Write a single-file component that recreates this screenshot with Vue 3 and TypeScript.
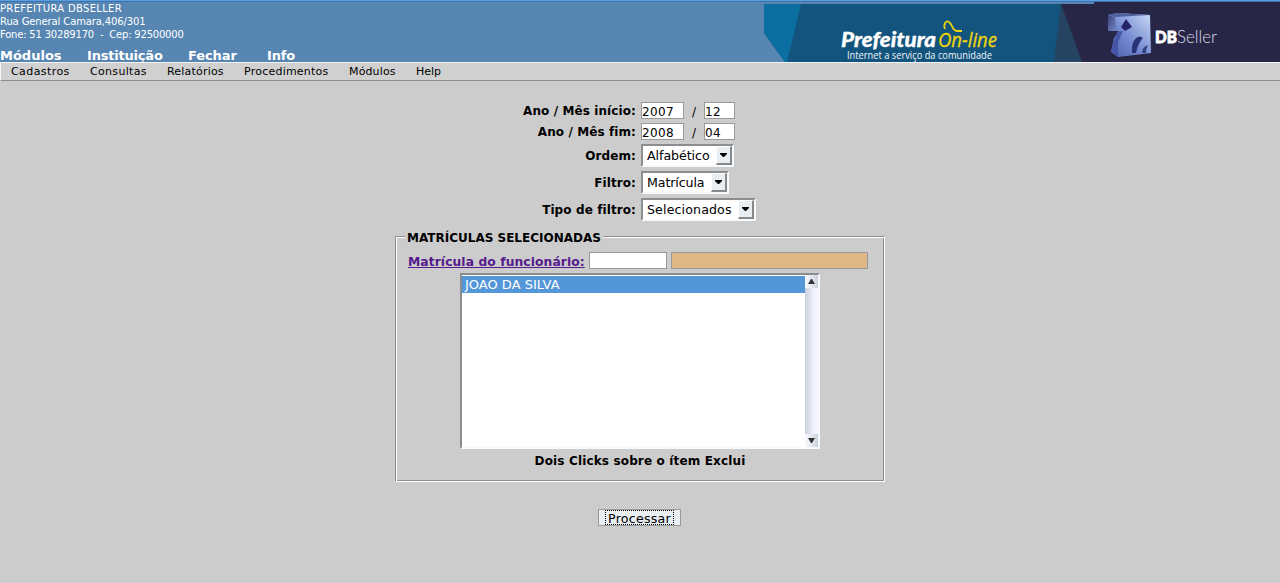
<script setup lang="ts">
import { ref } from 'vue'

const address = [
  { text: 'PREFEITURA DBSELLER', spacing: 0.33 },
  { text: 'Rua General Camara,406/301', spacing: -0.12 },
  { text: 'Fone: 51 30289170\u00a0 -\u00a0 Cep: 92500000', spacing: -0.2 },
]
const modules = [
  { text: 'Módulos', width: 62, gap: 25, spacing: 0 },
  { text: 'Instituição', width: 76, gap: 25, spacing: -0.2 },
  { text: 'Fechar', width: 50, gap: 29, spacing: -0.1 },
  { text: 'Info', width: 28, gap: 0, spacing: -0.2 },
]
const menu = [
  { text: 'Cadastros', width: 79, spacing: 0.42 },
  { text: 'Consultas', width: 77, spacing: 0.32 },
  { text: 'Relatórios', width: 77, spacing: 0.2 },
  { text: 'Procedimentos', width: 105, spacing: 0.23 },
  { text: 'Módulos', width: 67, spacing: 0.14 },
  { text: 'Help', width: 50, spacing: 0 },
]
const periods = ref([
  { label: 'Ano / Mês início:', year: '2007', month: '12' },
  { label: 'Ano / Mês fim:', year: '2008', month: '04' },
])
const selects = [
  { label: 'Ordem:', value: 'Alfabético', width: 93, spacing: -0.05 },
  { label: 'Filtro:', value: 'Matrícula', width: 88, spacing: -0.1 },
  { label: 'Tipo de filtro:', value: 'Selecionados', width: 115, spacing: 0.13 },
]
const code = ref('')
const employee = ref('')
</script>

<template>
  <div class="page">
    <header class="banner">
      <div class="account">
        <address>
          <div v-for="line in address" :key="line.text" :style="{ letterSpacing: line.spacing + 'px' }">{{ line.text }}</div>
        </address>
        <nav class="modules">
          <a v-for="m in modules" :key="m.text" :style="{ width: m.width + 'px', marginRight: m.gap + 'px', letterSpacing: m.spacing + 'px' }">{{ m.text }}</a>
        </nav>
      </div>
      <svg class="art" width="516" height="62" viewBox="764 0 516 62">
        <defs>
          <linearGradient id="cube" x1="0" y1="1" x2="1" y2="0">
            <stop offset="0" stop-color="#4a5cac" />
            <stop offset=".45" stop-color="#7389d0" />
            <stop offset="1" stop-color="#cbdcf8" />
          </linearGradient>
          <linearGradient id="side" x1="0" y1="0" x2="1" y2="1">
            <stop offset="0" stop-color="#3c4478" />
            <stop offset="1" stop-color="#7688cc" />
          </linearGradient>
          <filter id="soft"><feGaussianBlur stdDeviation=".6" /></filter>
        </defs>
        <path d="M764 4H1094V2H1280V62H785L764 33Z" fill="#12547d" />
        <path d="M764 4H801L787 62H785L764 33Z" fill="#0a6fa0" />
        <path d="M1061 4L1054 62H1083Z" fill="#254461" />
        <path d="M1061 4H1094V2H1280V62H1082Z" fill="#272646" />
        <text class="brand" x="841" y="47" textLength="95" lengthAdjust="spacingAndGlyphs">Prefeitura</text>
        <text class="online" x="938" y="47" textLength="59" lengthAdjust="spacingAndGlyphs">On-line</text>
        <path d="M945 29C943 24 946 20 949 22C953 25 952 31 957 31H962" fill="none" stroke="#eed50d" stroke-width="1.8" />
        <text class="tagline" x="847" y="59" textLength="145" lengthAdjust="spacingAndGlyphs">Internet a serviço da comunidade</text>
        <g filter="url(#soft)">
          <path d="M1108 15L1117 13L1150 15L1151 53L1118 57L1111 52L1114 38L1119 31L1108 31Z" fill="url(#cube)" />
          <path d="M1108 15L1115 17L1117 31L1108 31Z" fill="url(#side)" />
          <path d="M1108 15L1117 13L1150 15L1115 17Z" fill="#5360a0" />
          <path d="M1117 32L1111 51L1118 57L1118 42L1123 31Z" fill="#4557a6" />
          <path d="M1126 19L1132 27L1125 31L1121 27Z" fill="#252467" />
          <path d="M1132 53Q1131 43 1136 38Q1140 35 1143 38Q1138 43 1136 53Z" fill="#2c3578" />
          <path d="M1142 53Q1142 47 1148 45Q1146 48 1146 53Z" fill="#344281" />
        </g>
        <text class="db" x="1155" y="43" textLength="22" lengthAdjust="spacingAndGlyphs">DB</text>
        <text class="seller" x="1177" y="43" textLength="40" lengthAdjust="spacingAndGlyphs">Seller</text>
      </svg>
    </header>

    <nav class="menu">
      <a v-for="m in menu" :key="m.text" :style="{ width: m.width + 'px', letterSpacing: m.spacing + 'px' }">{{ m.text }}</a>
    </nav>

    <form class="form" @submit.prevent>
      <div v-for="p in periods" :key="p.label" class="row period">
        <label>{{ p.label }}</label>
        <input v-model="p.year" class="field year">
        <span class="slash">/</span>
        <input v-model="p.month" class="field month">
      </div>
      <div v-for="s in selects" :key="s.label" class="row choice">
        <label>{{ s.label }}</label>
        <div class="select" :style="{ width: s.width + 'px' }">
          <span :style="{ letterSpacing: s.spacing + 'px' }">{{ s.value }}</span>
          <i class="drop"><svg width="7" height="4"><path d="M0 0H7V1L4 4H3L0 1Z" /></svg></i>
        </div>
      </div>

      <section class="group">
        <h2>MATRÍCULAS SELECIONADAS</h2>
        <div class="lookup">
          <a>Matrícula do funcionário:</a>
          <input v-model="code" class="field code">
          <input v-model="employee" class="field name" readonly>
        </div>
        <div class="list">
          <div class="items"><div class="item">JOAO DA SILVA</div></div>
          <div class="scroll">
            <i><svg width="7" height="5"><path d="M0 5L3 0H4L7 5Z" /></svg></i>
            <i><svg width="7" height="5"><path d="M0 0H7L4 5H3Z" /></svg></i>
          </div>
        </div>
        <p>Dois Clicks sobre o ítem Exclui</p>
      </section>

      <button type="submit"><span>Processar</span></button>
    </form>
  </div>
</template>

<style>
body { background: #ccc; }
</style>

<style scoped>
* { box-sizing: border-box; }
.page { height: 583px; overflow: hidden; background: #ccc; color: #000; font: 12px/14px "DejaVu Sans", sans-serif; }
.banner { height: 62px; display: flex; justify-content: space-between; background: linear-gradient(#5c9fe0 0 1px, #3c74af 1px 2px, #5786b2 2px); }
.account { color: #fff; padding-top: 2px; }
address { font: normal 10px/13px "DejaVu Sans", sans-serif; white-space: nowrap; height: 39px; }
.modules { display: flex; margin-top: 7px; font-size: 13px; font-weight: bold; line-height: 15px; }
.modules a { white-space: nowrap; }
.art { display: block; }
.brand { font: italic 900 20.5px Lato, sans-serif; fill: #fff; stroke: #fff; stroke-width: .3px; }
.online { font: italic 20.5px "Open Sans", sans-serif; fill: #eed50d; stroke: #eed50d; stroke-width: .3px; }
.tagline { font: 10px "Open Sans", sans-serif; fill: #f0f6fa; }
.db { font: 900 17.5px Lato, sans-serif; fill: #fff; stroke: #fff; stroke-width: .8px; }
.seller { font: 300 18px Lato, sans-serif; fill: #d8d8e8; }
.menu { height: 19px; display: flex; padding-left: 10px; font-size: 11px; line-height: 17px; background: #d0d0d0; border-top: 1px solid #f4f4f4; border-left: 1px solid #f4f4f4; border-bottom: 1px solid #8c8c8c; }
.menu a { white-space: nowrap; }
.form { padding-top: 21px; display: flex; flex-direction: column; }
.row { display: grid; column-gap: 5px; align-items: center; justify-content: start; }
.period { grid-template-columns: 636px 43px 10px 31px; height: 17px; margin-bottom: 4px; }
.choice { grid-template-columns: 636px auto; height: 23px; margin-bottom: 4px; }
.row label { text-align: right; font-weight: bold; white-space: nowrap; letter-spacing: .1px; }
.slash { text-align: center; padding-top: 2px; }
.field { height: 17px; border: 1px solid #999; border-radius: 0; background: #fff; padding: 2px 0 0; margin: 0; outline: 0; font: 12px/14px "DejaVu Sans", sans-serif; letter-spacing: .35px; min-width: 0; }
.select { height: 23px; display: flex; justify-content: space-between; background: #fff; border: 2px solid; border-color: #8b8d8f #f7f9fa #f7f9fa #8b8d8f; padding-left: 4px; font-size: 12.6px; line-height: 19px; white-space: nowrap; }
.drop { width: 16px; height: 19px; display: flex; align-items: center; justify-content: center; background: #e9eef2; border: solid; border-width: 1px 2px 2px 1px; border-color: #fff #85898c #85898c #fff; }
.group { position: relative; width: 490px; height: 246px; margin: 11px 0 0 395px; padding: 15px 13px 0; border: 1px solid; border-color: #8d8d8d #fff #fff #8d8d8d; box-shadow: inset 1px 1px #fff, inset -1px -1px #8d8d8d; }
.group h2 { position: absolute; left: 9px; top: -7px; margin: 0; padding: 0 2px; width: 198px; white-space: nowrap; background: #ccc; font: bold 12px/16px "DejaVu Sans", sans-serif; }
.lookup { display: flex; gap: 4px; height: 17px; margin-left: -1px; }
.lookup a { width: 177px; white-space: nowrap; color: #551a8b; text-decoration: underline; font-size: 12.3px; letter-spacing: .09px; font-weight: bold; line-height: 20px; }
.code { width: 78px; }
.name { width: 197px; background: #deb887; }
.list { width: 360px; height: 176px; margin: 4px 0 0 51px; display: flex; background: #fff; border: 2px solid; border-color: #8a8c8e #f7f9fa #f7f9fa #8a8c8e; }
.items { flex: 1; padding-top: 1px; }
.item { height: 17px; padding-left: 3px; background: #5497d8; color: #fff; font-size: 13px; line-height: 17px; }
.scroll { width: 13px; display: flex; flex-direction: column; justify-content: space-between; background: linear-gradient(90deg, #cbd0dc, #edf1fc 65%, #f7f9ff); }
.scroll i { height: 13px; display: flex; align-items: center; justify-content: center; background: linear-gradient(90deg, #f7f9fc, #e2e7ef 55%, #cbd1db); }
.scroll path { fill: #333; }
.group p { margin: 5px 0 0; text-align: center; font-weight: bold; white-space: nowrap; letter-spacing: .15px; }
button { width: 83px; height: 17px; margin: 27px 0 0 598px; padding: 0; display: flex; justify-content: center; align-items: center; border: 1px solid #999; border-radius: 0; background: #e9eef2; color: #000; font: 12.6px/14px "DejaVu Sans", sans-serif; letter-spacing: .25px; }
button span { width: 69px; height: 15px; border: 1px dotted #000; line-height: 15px; white-space: nowrap; }
</style>
